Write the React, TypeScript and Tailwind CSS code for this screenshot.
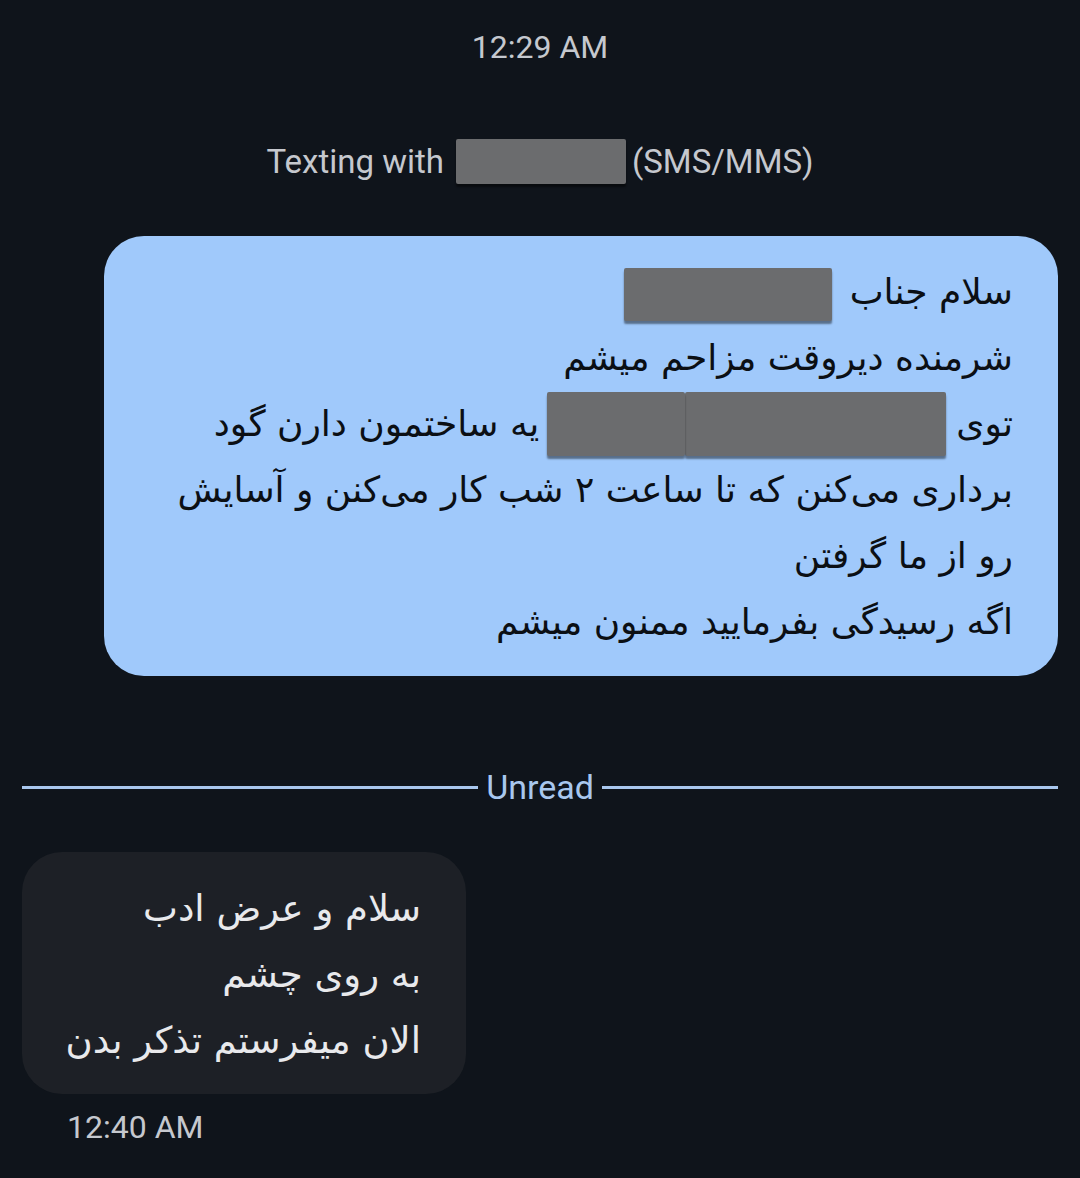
import React from 'react';

const fa = { fontFamily: '"DejaVu Sans", sans-serif' };

const Redacted: React.FC<{ className?: string }> = ({ className = '' }) => (
  <span
    className={`inline-block align-middle rounded-[2px] bg-[#6b6c6e] shadow-[0_3px_2px_rgba(0,0,0,0.45)] ${className}`}
  />
);

const App: React.FC = () => {
  return (
    <div className="w-[1080px] h-[1178px] bg-[#0f141b] overflow-hidden font-['Roboto',sans-serif]">
      <div className="pt-[28px] text-center text-[32px] leading-[38px] text-[#c5c8ce]">12:29 AM</div>

      <div className="mt-[73px] flex items-center justify-center text-[33px] leading-[38px] text-[#c5c8ce]">
        <span>Texting with</span>
        <Redacted className="ml-[12px] mr-[6px] w-[170px] h-[45px]" />
        <span>(SMS/MMS)</span>
      </div>

      <div className="mt-[52px] flex justify-end pr-[22px]">
        <div
          dir="rtl"
          style={fa}
          className="w-[954px] rounded-[40px] bg-[#a0c9fb] pr-[45px] pl-[40px] pt-[23px] pb-[21px] text-[36px] leading-[66px] text-[#0b0f14]"
        >
          <div>
            سلام جناب <Redacted className="mr-[6px] w-[208px] h-[53px]" />
          </div>
          <div>شرمنده دیروقت مزاحم میشم</div>
          <div className="flex items-center">
            <span>توی</span>
            <Redacted className="mr-[10px] w-[261px] h-[64px]" />
            <Redacted className="w-[138px] h-[64px]" />
            <span className="mr-[8px]">یه ساختمون دارن گود</span>
          </div>
          <div>برداری می‌کنن که تا ساعت ۲ شب کار می‌کنن و آسایش</div>
          <div>رو از ما گرفتن</div>
          <div>اگه رسیدگی بفرمایید ممنون میشم</div>
        </div>
      </div>

      <div className="mt-[91px] flex items-center px-[22px]">
        <div className="flex-1 h-[3px] bg-[#a9c7ee]" />
        <span className="px-[8px] text-[34px] leading-[40px] text-[#a8c7ee]">Unread</span>
        <div className="flex-1 h-[3px] bg-[#a9c7ee]" />
      </div>

      <div className="mt-[45px] pl-[22px]">
        <div
          dir="rtl"
          style={fa}
          className="w-[444px] rounded-[40px] bg-[#1d2026] pr-[45px] pl-[30px] pt-[24px] pb-[20px] text-[37px] leading-[66px] text-[#e8e9ec]"
        >
          <div>سلام و عرض ادب</div>
          <div>به روی چشم</div>
          <div>الان میفرستم تذکر بدن</div>
        </div>
      </div>

      <div className="pl-[67px] mt-[14px] text-[32px] leading-[38px] text-[#c5c8ce]">12:40 AM</div>
    </div>
  );
};

export default App;
